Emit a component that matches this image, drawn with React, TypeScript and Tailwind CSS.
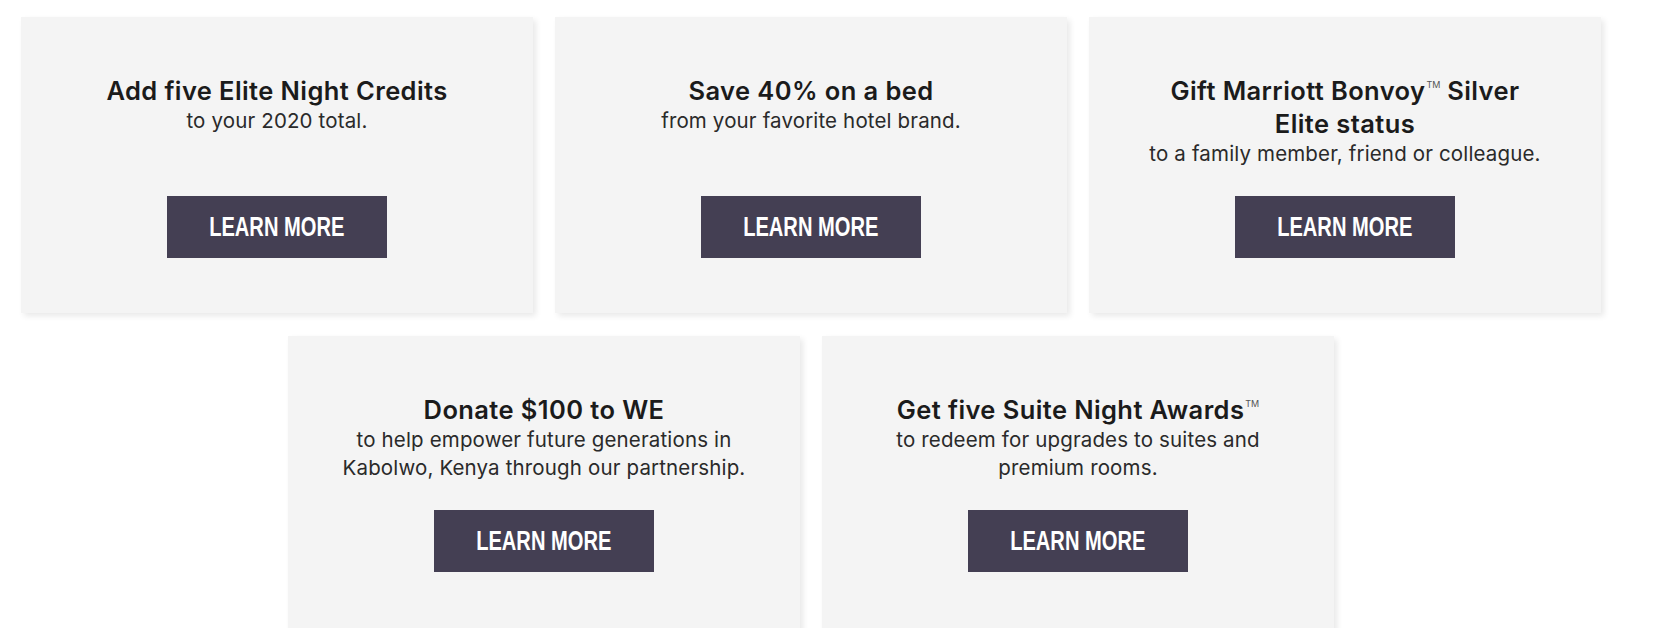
import React from 'react'

type Offer = {
  title: React.ReactNode[]
  lines: string[]
  tall?: boolean
}

const TM = () => (
  <sup className="relative -top-[3px] ml-[1px] text-[9px] font-normal tracking-normal text-[#555] align-super">TM</sup>
)

// first row keeps its text blocks the same height, so the buttons line up
const offers: Offer[] = [
  { title: ['Add five Elite Night Credits'], lines: ['to your 2020 total.'], tall: true },
  { title: ['Save 40% on a bed'], lines: ['from your favorite hotel brand.'], tall: true },
  {
    title: [<>Gift Marriott Bonvoy<TM /> Silver</>, 'Elite status'],
    lines: ['to a family member, friend or colleague.'],
    tall: true,
  },
  {
    title: ['Donate $100 to WE'],
    lines: ['to help empower future generations in', 'Kabolwo, Kenya through our partnership.'],
  },
  {
    title: [<>Get five Suite Night Awards<TM /></>],
    lines: ['to redeem for upgrades to suites and', 'premium rooms.'],
  },
]

function OfferCard({ offer }: { offer: Offer }) {
  return (
    <div className="w-[512px] h-[296px] shrink-0 bg-[#f4f4f4] shadow-[3px_3px_6px_rgba(0,0,0,0.09)] flex flex-col items-center pt-[57px] text-center">
      <div className={offer.tall ? 'min-h-[94px]' : ''}>
        {offer.title.map((t, i) => (
          <div key={i} className="whitespace-nowrap text-[25.5px] leading-[33px] font-semibold tracking-[0.4px] text-[#1b1b1b]">
            {t}
          </div>
        ))}
        {offer.lines.map((l, i) => (
          <div key={i} className="whitespace-nowrap text-[20.5px] leading-[28px] tracking-[0.15px] text-[#2a2a2a]">
            {l}
          </div>
        ))}
      </div>
      <button className="mt-[28px] w-[220px] h-[62px] bg-[#443f53] text-white flex items-center justify-center">
        <span
          className="inline-block scale-x-[0.745] text-[27px] font-bold leading-none"
          style={{ fontFamily: '"Liberation Sans", Arial, sans-serif' }}
        >
          LEARN MORE
        </span>
      </button>
    </div>
  )
}

export default function App() {
  return (
    <div className="w-[1656px] h-[628px] overflow-hidden bg-white" style={{ fontFamily: 'Inter, "Noto Sans", sans-serif' }}>
      <div className="ml-[21px] pt-[17px] w-[1580px] flex flex-wrap justify-center gap-x-[22px] gap-y-[23px]">
        {offers.map((o, i) => (
          <OfferCard key={i} offer={o} />
        ))}
      </div>
    </div>
  )
}
